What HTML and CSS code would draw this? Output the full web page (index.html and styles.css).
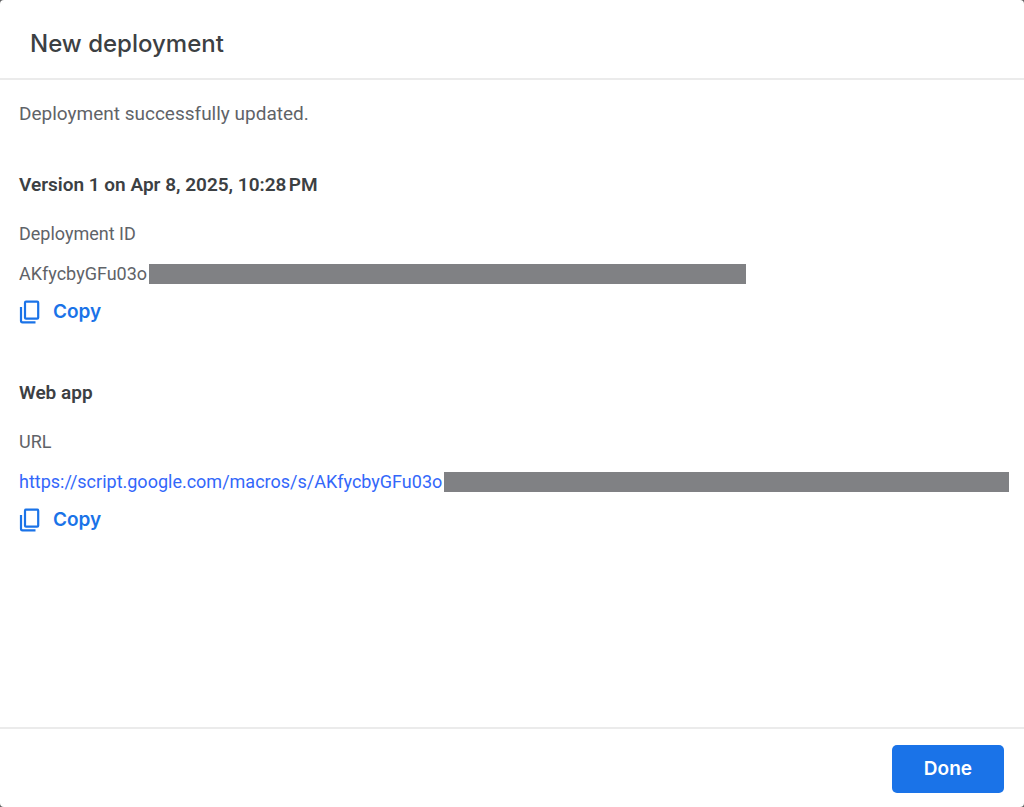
FILE: index.html
```html
<!DOCTYPE html>
<html lang="en">
<head>
	<meta charset="utf-8">
	<title>New deployment</title>
	<link rel="stylesheet" href="styles.css">
</head>

<body>
	<div class="dialog" role="dialog" aria-labelledby="dialog-title">
		<header class="dialog-header">
			<h1 id="dialog-title">New deployment</h1>
		</header>

		<main class="dialog-content">
			<p class="status">Deployment successfully updated.</p>

			<section class="deployment">
				<h2>Version 1 on Apr 8, 2025, 10:28&#8239;PM</h2>
				<div class="label">Deployment ID</div>
				<div class="value">
					<span>AKfycbyGFu03o</span>
					<span class="redacted redacted-id"></span>
				</div>
				<button type="button" class="copy-button">
					<svg class="copy-icon" viewBox="0 0 22 24" aria-hidden="true">
						<rect x="6" y="1.7" width="13.2" height="17" rx="1"></rect>
						<path d="M2 7V20.8Q2 22.3 3.5 22.3H16.5"></path>
					</svg>
					Copy
				</button>
			</section>

			<section class="deployment">
				<h2>Web app</h2>
				<div class="label">URL</div>
				<div class="value">
					<a href="#">https://script.google.com/macros/s/AKfycbyGFu03o</a>
					<span class="redacted"></span>
				</div>
				<button type="button" class="copy-button">
					<svg class="copy-icon" viewBox="0 0 22 24" aria-hidden="true">
						<rect x="6" y="1.7" width="13.2" height="17" rx="1"></rect>
						<path d="M2 7V20.8Q2 22.3 3.5 22.3H16.5"></path>
					</svg>
					Copy
				</button>
			</section>
		</main>

		<footer class="dialog-footer">
			<button type="button" class="done-button">Done</button>
		</footer>
	</div>
</body>

</html>
```
FILE: styles.css
```css
* {
	box-sizing: border-box;
}

body {
	margin: 0;
	background-color: #5f6062;
	font-family: Roboto, sans-serif;
	color: #5f6368;
}

h1, h2, p {
	margin: 0;
}

.dialog {
	display: flex;
	flex-direction: column;
	min-height: 100vh;
	background-color: #fff;
	border-radius: 4px;
}

.dialog-header {
	padding: 29px 30px 19px;
	border-bottom: 2px solid #ebebeb;
}

.dialog-header h1 {
	font-family: Inter, sans-serif;
	font-size: 24px;
	line-height: 30px;
	font-weight: 500;
	color: #3c4043;
}

.dialog-content {
	flex: 1;
	padding: 20px 15px 20px 19px;
}

.status {
	font-size: 19px;
	line-height: 28px;
}

.deployment {
	margin-top: 42px;
}

.deployment + .deployment {
	margin-top: 52px;
}

.deployment h2 {
	margin-bottom: 20px;
	font-size: 19px;
	line-height: 30px;
	font-weight: 600;
	color: #3c4043;
}

.label {
	margin-bottom: 12px;
	font-size: 18px;
	line-height: 28px;
}

.value {
	display: flex;
	align-items: center;
	font-size: 18px;
	line-height: 28px;
}

.value a {
	color: #3367fa;
	text-decoration: none;
}

.redacted {
	flex: 1;
	height: 20px;
	margin-left: 2px;
	background-color: #808184;
}

.redacted-id {
	max-width: 597px;
}

.copy-button {
	display: flex;
	align-items: center;
	gap: 12px;
	margin-top: 10px;
	padding: 0;
	border: none;
	background: none;
	font-family: Inter, sans-serif;
	font-size: 19px;
	line-height: 28px;
	font-weight: 600;
	color: #1a73e8;
	cursor: pointer;
}

.copy-icon {
	width: 22px;
	height: 24px;
	fill: none;
	stroke: #1a73e8;
	stroke-width: 2.2;
}

.dialog-footer {
	display: flex;
	justify-content: flex-end;
	padding: 16px 20px 14px;
	border-top: 2px solid #ebebeb;
}

.done-button {
	padding: 10px 32px;
	border: none;
	border-radius: 5px;
	background-color: #1a73e8;
	font-family: Inter, sans-serif;
	font-size: 19px;
	line-height: 28px;
	font-weight: 600;
	color: #fff;
	cursor: pointer;
}
```
